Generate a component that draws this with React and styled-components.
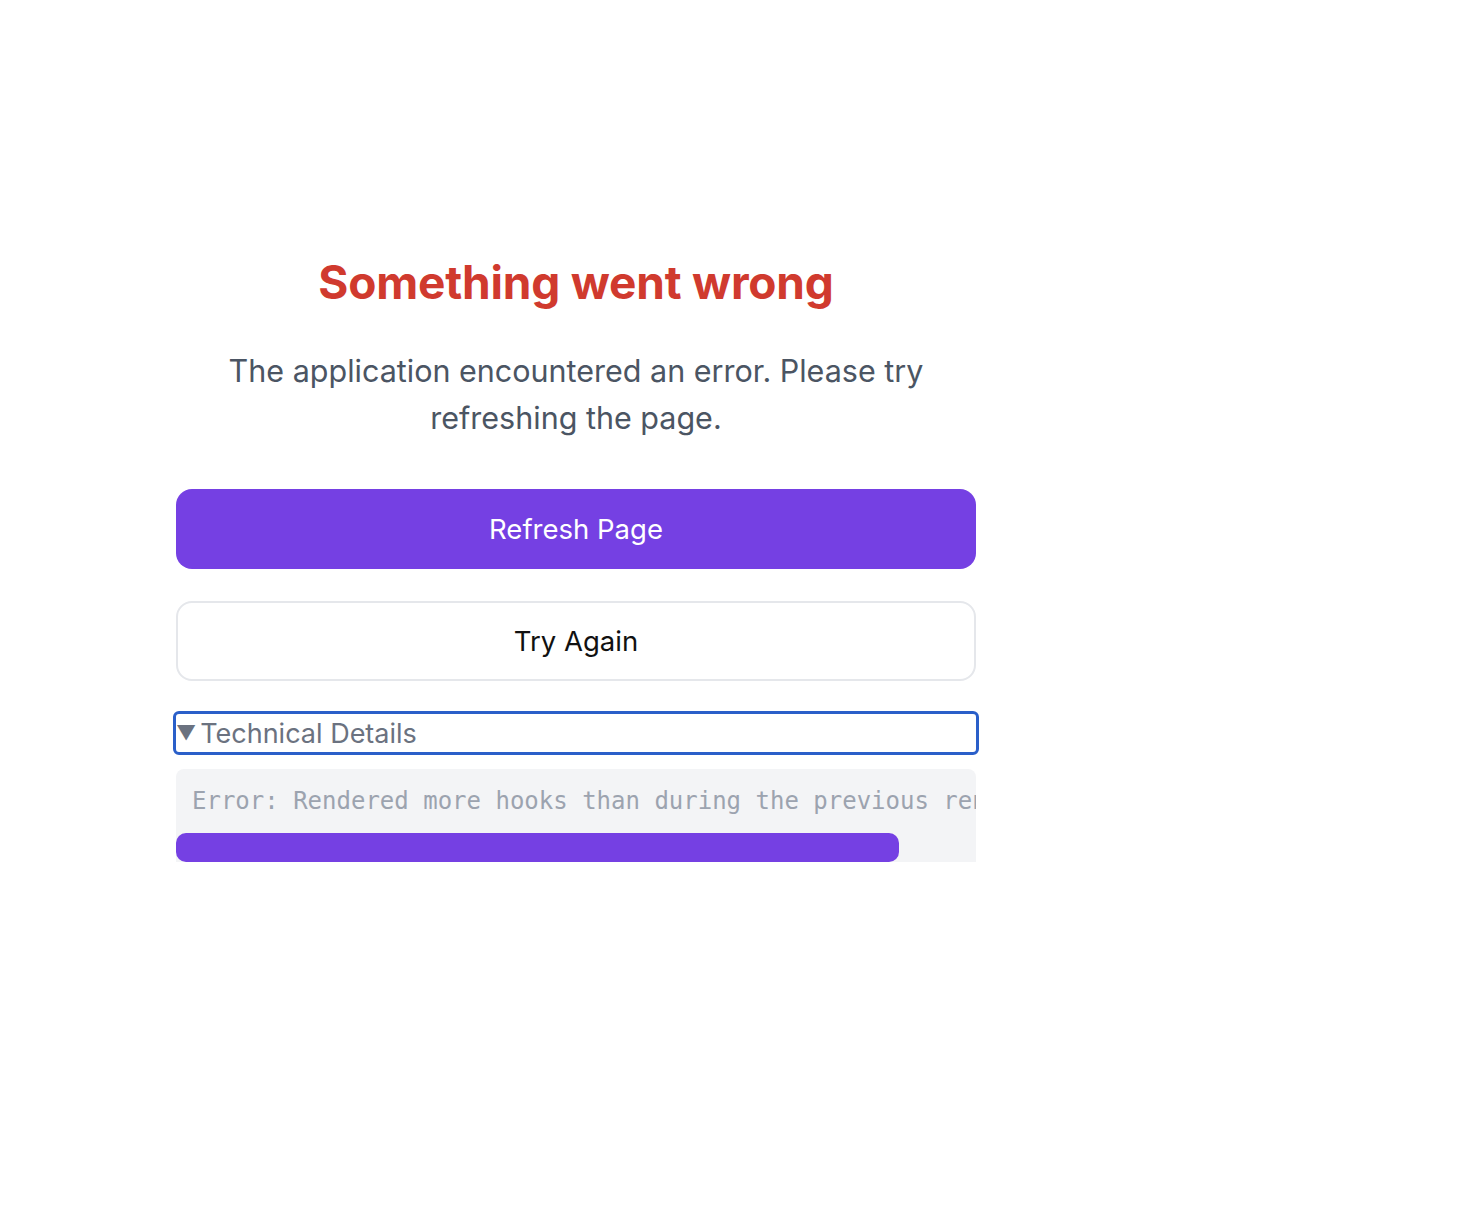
import React from 'react'
import styled, { createGlobalStyle } from 'styled-components'

const GlobalStyle = createGlobalStyle`
  html, body {
    margin: 0;
    padding: 0;
    background: #ffffff;
    font-family: Inter, "Noto Sans", sans-serif;
  }
`

const Page = styled.div`
  width: 1152px;
  display: flex;
  justify-content: center;
  padding-top: 254px;
`

const Panel = styled.div`
  width: 800px;
  display: flex;
  flex-direction: column;
  text-align: center;
`

const Title = styled.h1`
  margin: 0;
  color: #d03a2e;
  font-size: 46px;
  font-weight: 700;
  line-height: 56px;
  letter-spacing: -0.2px;
`

const Message = styled.p`
  margin: 37px 0 0;
  color: #4b5563;
  font-size: 30.5px;
  line-height: 47px;
`

const Button = styled.button`
  height: 80px;
  width: 100%;
  border-radius: 16px;
  font-family: inherit;
  font-size: 27.5px;
  cursor: pointer;
  margin-top: ${p => p.gap}px;
  background: ${p => (p.primary ? '#7540e3' : '#ffffff')};
  color: ${p => (p.primary ? '#ffffff' : '#111111')};
  border: ${p => (p.primary ? 'none' : '2px solid #e5e7eb')};
`

const Details = styled.details`
  margin-top: 33px;
  text-align: left;
`

const Summary = styled.summary`
  list-style: none;
  display: flex;
  align-items: center;
  height: 38px;
  color: #6b7280;
  font-size: 27px;
  outline: 3px solid #2a5fc9;
  outline-offset: 0;
  border-radius: 3px;
  cursor: pointer;

  &::-webkit-details-marker {
    display: none;
  }
`

const Arrow = styled.span`
  font-size: 20px;
  margin-right: 4px;
  color: #6b7280;
`

const TraceBox = styled.div`
  margin-top: 17px;
  background: #f3f4f6;
  border-radius: 8px 8px 0 0;
  overflow: hidden;
`

const Trace = styled.pre`
  margin: 0;
  padding: 16px 0 16px 16px;
  color: #9ca3af;
  font-family: "DejaVu Sans Mono", monospace;
  font-size: 24px;
  line-height: 32px;
  overflow: hidden;
  white-space: pre;
`

const ScrollThumb = styled.div`
  height: 29px;
  background: #7540e3;
  border-radius: 10px;
`

const message = 'Error: Rendered more hooks than during the previous render.'

export default function App() {
  // thumb width follows visible / total width of the trace line
  const thumb = Math.round((800 / (message.length * 14.46 + 32)) * 800)

  return (
    <>
      <GlobalStyle />
      <Page>
        <Panel>
          <Title>Something went wrong</Title>
          <Message>
            The application encountered an error. Please try
            <br />
            refreshing the page.
          </Message>
          <Button primary gap={48}>Refresh Page</Button>
          <Button gap={32}>Try Again</Button>
          <Details open>
            <Summary>
              <Arrow>▼</Arrow>Technical Details
            </Summary>
            <TraceBox>
              <Trace>{message}</Trace>
              <ScrollThumb style={{ width: thumb }} />
            </TraceBox>
          </Details>
        </Panel>
      </Page>
    </>
  )
}
